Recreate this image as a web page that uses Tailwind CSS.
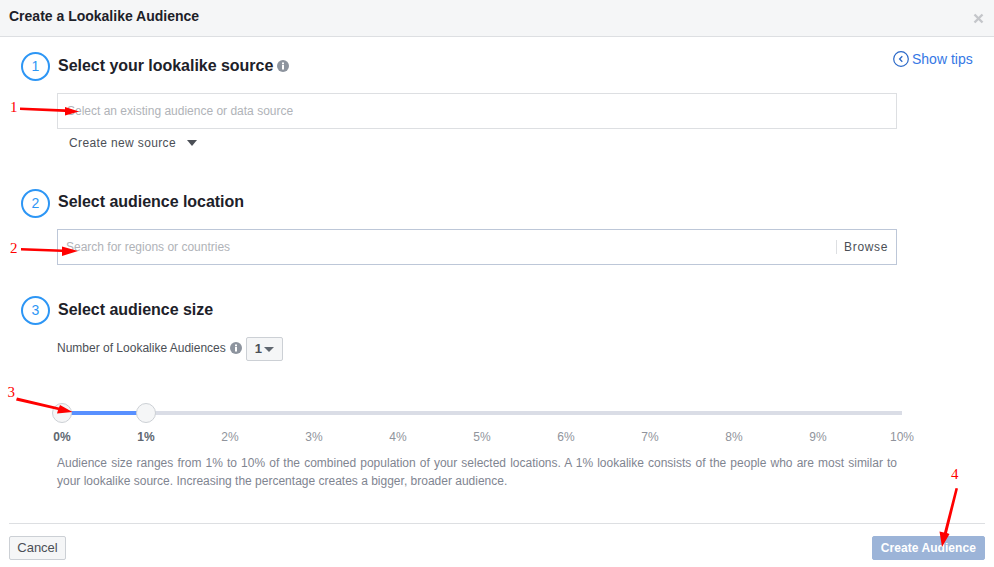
<!DOCTYPE html>
<html lang="en">
<head>
  <meta charset="UTF-8">
  <title>Create a Lookalike Audience</title>
  <script src="https://cdn.jsdelivr.net/npm/@tailwindcss/browser@4"></script>
</head>
<body class="bg-white">
  <div class="relative w-[994px] h-[567px] overflow-hidden font-['Liberation_Sans',Arial,sans-serif] text-[#1d2129]">

    <!-- Header -->
    <div class="flex items-center justify-between h-[37px] pl-[9px] pr-[10px] bg-[#f5f6f7] border-b border-[#dddfe2]">
      <h1 class="text-[14px] font-bold -mt-[4px]">Create a Lookalike Audience</h1>
      <svg class="w-[11px] h-[11px]" viewBox="0 0 11 11"><path d="M1.5 1.5l8 8M9.5 1.5l-8 8" stroke="#c4c6ca" stroke-width="2.4" fill="none"/></svg>
    </div>

    <!-- Show tips -->
    <div class="absolute top-[51px] left-[893px] flex items-center gap-[3px] text-[14px] leading-[16px] text-[#3578e5]">
      <svg class="w-[16px] h-[16px]" viewBox="0 0 16 16" fill="none"><circle cx="8" cy="8" r="7.3" stroke="#2a68c8" stroke-width="1.2"/><path d="M9.3 5.3L6.6 8l2.7 2.7" stroke="#2a68c8" stroke-width="1.3"/></svg>
      <span>Show tips</span>
    </div>

    <div class="pl-[21px] w-[897px]">
      <!-- Step 1 -->
      <div class="flex items-center gap-[8px] mt-[15px] h-[29px]">
        <div class="flex items-center justify-center w-[29px] h-[29px] rounded-full border-2 border-[#2d96f5] text-[14px] text-[#2d96f5]">1</div>
        <h2 class="text-[16px] font-bold -mt-[2px] tracking-[-0.03px]">Select your lookalike source</h2>
        <svg class="w-[12px] h-[12px] -ml-[4px] -mt-[1px]" viewBox="0 0 12 12"><circle cx="6" cy="6" r="6" fill="#8d949e"/><rect x="5" y="5" width="2" height="4.5" fill="#fff"/><rect x="5" y="2.5" width="2" height="1.8" fill="#fff"/></svg>
      </div>
      <div class="flex items-center ml-[36px] mt-[12px] h-[36px] pl-[9px] border border-[#dddfe2] text-[12px] text-[#b0b3b8]">Select an existing audience or data source</div>
      <div class="flex items-center gap-[11px] ml-[48px] mt-[6px] h-[16px] text-[12px] text-[#4b4f56] tracking-[0.37px]">
        <span>Create new source</span>
        <span class="w-0 h-0 border-x-[5.5px] border-x-transparent border-t-[6px] border-t-[#4b4f56]"></span>
      </div>

      <!-- Step 2 -->
      <div class="flex items-center gap-[8px] mt-[38px] h-[29px]">
        <div class="flex items-center justify-center w-[29px] h-[29px] rounded-full border-2 border-[#2d96f5] text-[14px] text-[#2d96f5]">2</div>
        <h2 class="text-[16px] font-bold -mt-[3px] tracking-[-0.03px]">Select audience location</h2>
      </div>
      <div class="flex items-center justify-between ml-[36px] mt-[11px] h-[36px] pl-[8px] pr-[8px] border border-[#bdc7d8] text-[12px]">
        <span class="text-[#b0b3b8]">Search for regions or countries</span>
        <span class="pl-[7px] border-l border-[#dddfe2] text-[#4b4f56] leading-[14px] tracking-[0.65px]">Browse</span>
      </div>

      <!-- Step 3 -->
      <div class="flex items-center gap-[8px] mt-[31px] h-[29px]">
        <div class="flex items-center justify-center w-[29px] h-[29px] rounded-full border-2 border-[#2d96f5] text-[14px] text-[#2d96f5]">3</div>
        <h2 class="text-[16px] font-bold -mt-[1px] tracking-[-0.03px]">Select audience size</h2>
      </div>
      <div class="flex items-center ml-[36px] mt-[11px] h-[24px] text-[12px] text-[#4b4f56]">
        <span>Number of Lookalike Audiences</span>
        <svg class="w-[12px] h-[12px] ml-[4px]" viewBox="0 0 12 12"><circle cx="6" cy="6" r="6" fill="#8d949e"/><rect x="5" y="5" width="2" height="4.5" fill="#fff"/><rect x="5" y="2.5" width="2" height="1.8" fill="#fff"/></svg>
        <div class="flex items-center gap-[2px] ml-[4px] mt-[2px] h-[24px] px-[8px] bg-[#f5f6f7] border border-[#ccd0d5] rounded-[2px] font-bold text-[13px]">
          <span>1</span>
          <span class="w-0 h-0 border-x-[5px] border-x-transparent border-t-[5px] border-t-[#606770]"></span>
        </div>
      </div>
    </div>

    <!-- Slider -->
    <div class="relative ml-[62px] mt-[51px] w-[840px] h-[4px] bg-[#dadde6]">
      <div class="h-full w-[84px] bg-[#5890ff]"></div>
      <div class="absolute -left-[10px] -top-[8px] w-[20px] h-[20px] rounded-full bg-[#f5f6f7] border border-[#ccd0d5]"></div>
      <div class="absolute left-[74px] -top-[8px] w-[20px] h-[20px] rounded-full bg-[#f5f6f7] border border-[#ccd0d5]"></div>
    </div>
    <div class="grid grid-cols-[repeat(11,84px)] ml-[20px] mt-[15px] text-[12px] leading-[14px] text-[#90949c] text-center">
      <span class="font-bold text-[#606770]">0%</span>
      <span class="font-bold text-[#606770]">1%</span>
      <span>2%</span><span>3%</span><span>4%</span><span>5%</span><span>6%</span><span>7%</span><span>8%</span><span>9%</span><span>10%</span>
    </div>

    <!-- Help text -->
    <p class="ml-[57px] mt-[10px] w-[840px] text-[12px] leading-[18px] text-justify text-[#7f8591]">Audience size ranges from 1% to 10% of the combined population of your selected locations. A 1% lookalike consists of the people who are most similar to your lookalike source. Increasing the percentage creates a bigger, broader audience.</p>

    <!-- Footer -->
    <div class="flex items-center justify-between mx-[9px] mt-[33px] pt-[12px] border-t border-[#dddfe2]">
      <button class="h-[24px] w-[57px] bg-[#f5f6f7] border border-[#ccd0d5] rounded-[2px] text-[13px] text-[#4b4f56]">Cancel</button>
      <button class="h-[24px] px-[8px] bg-[#9cb4d8] border border-[#9cb4d8] rounded-[2px] text-[12px] font-bold tracking-[0.07px] text-white">Create Audience</button>
    </div>

    <!-- Annotations -->
    <svg class="absolute inset-0 pointer-events-none" width="994" height="567" viewBox="0 0 994 567" fill="#ff0000">
      <path d="M20 107.5L65 109.3L65 107L79 111.5L65 115.5L65 112L20 110Z"/>
      <path d="M21 248L62 249.5L62 246.5L78 251L62 256L62 252L21 250.5Z"/>
      <path d="M17 397.5L59 407.5L60 405L72.5 412L57 413.5L58 410L16 400.5Z"/>
      <path d="M955.5 488L958 488.5L947 533L949.5 534L942 547L939.5 531.5L944 532.5Z"/>
      <text x="10" y="112" font-family="Liberation Serif" font-size="15">1</text>
      <text x="10" y="252.5" font-family="Liberation Serif" font-size="15">2</text>
      <text x="7.5" y="397" font-family="Liberation Serif" font-size="15">3</text>
      <text x="951" y="479" font-family="Liberation Serif" font-size="15">4</text>
    </svg>
  </div>
</body>
</html>
